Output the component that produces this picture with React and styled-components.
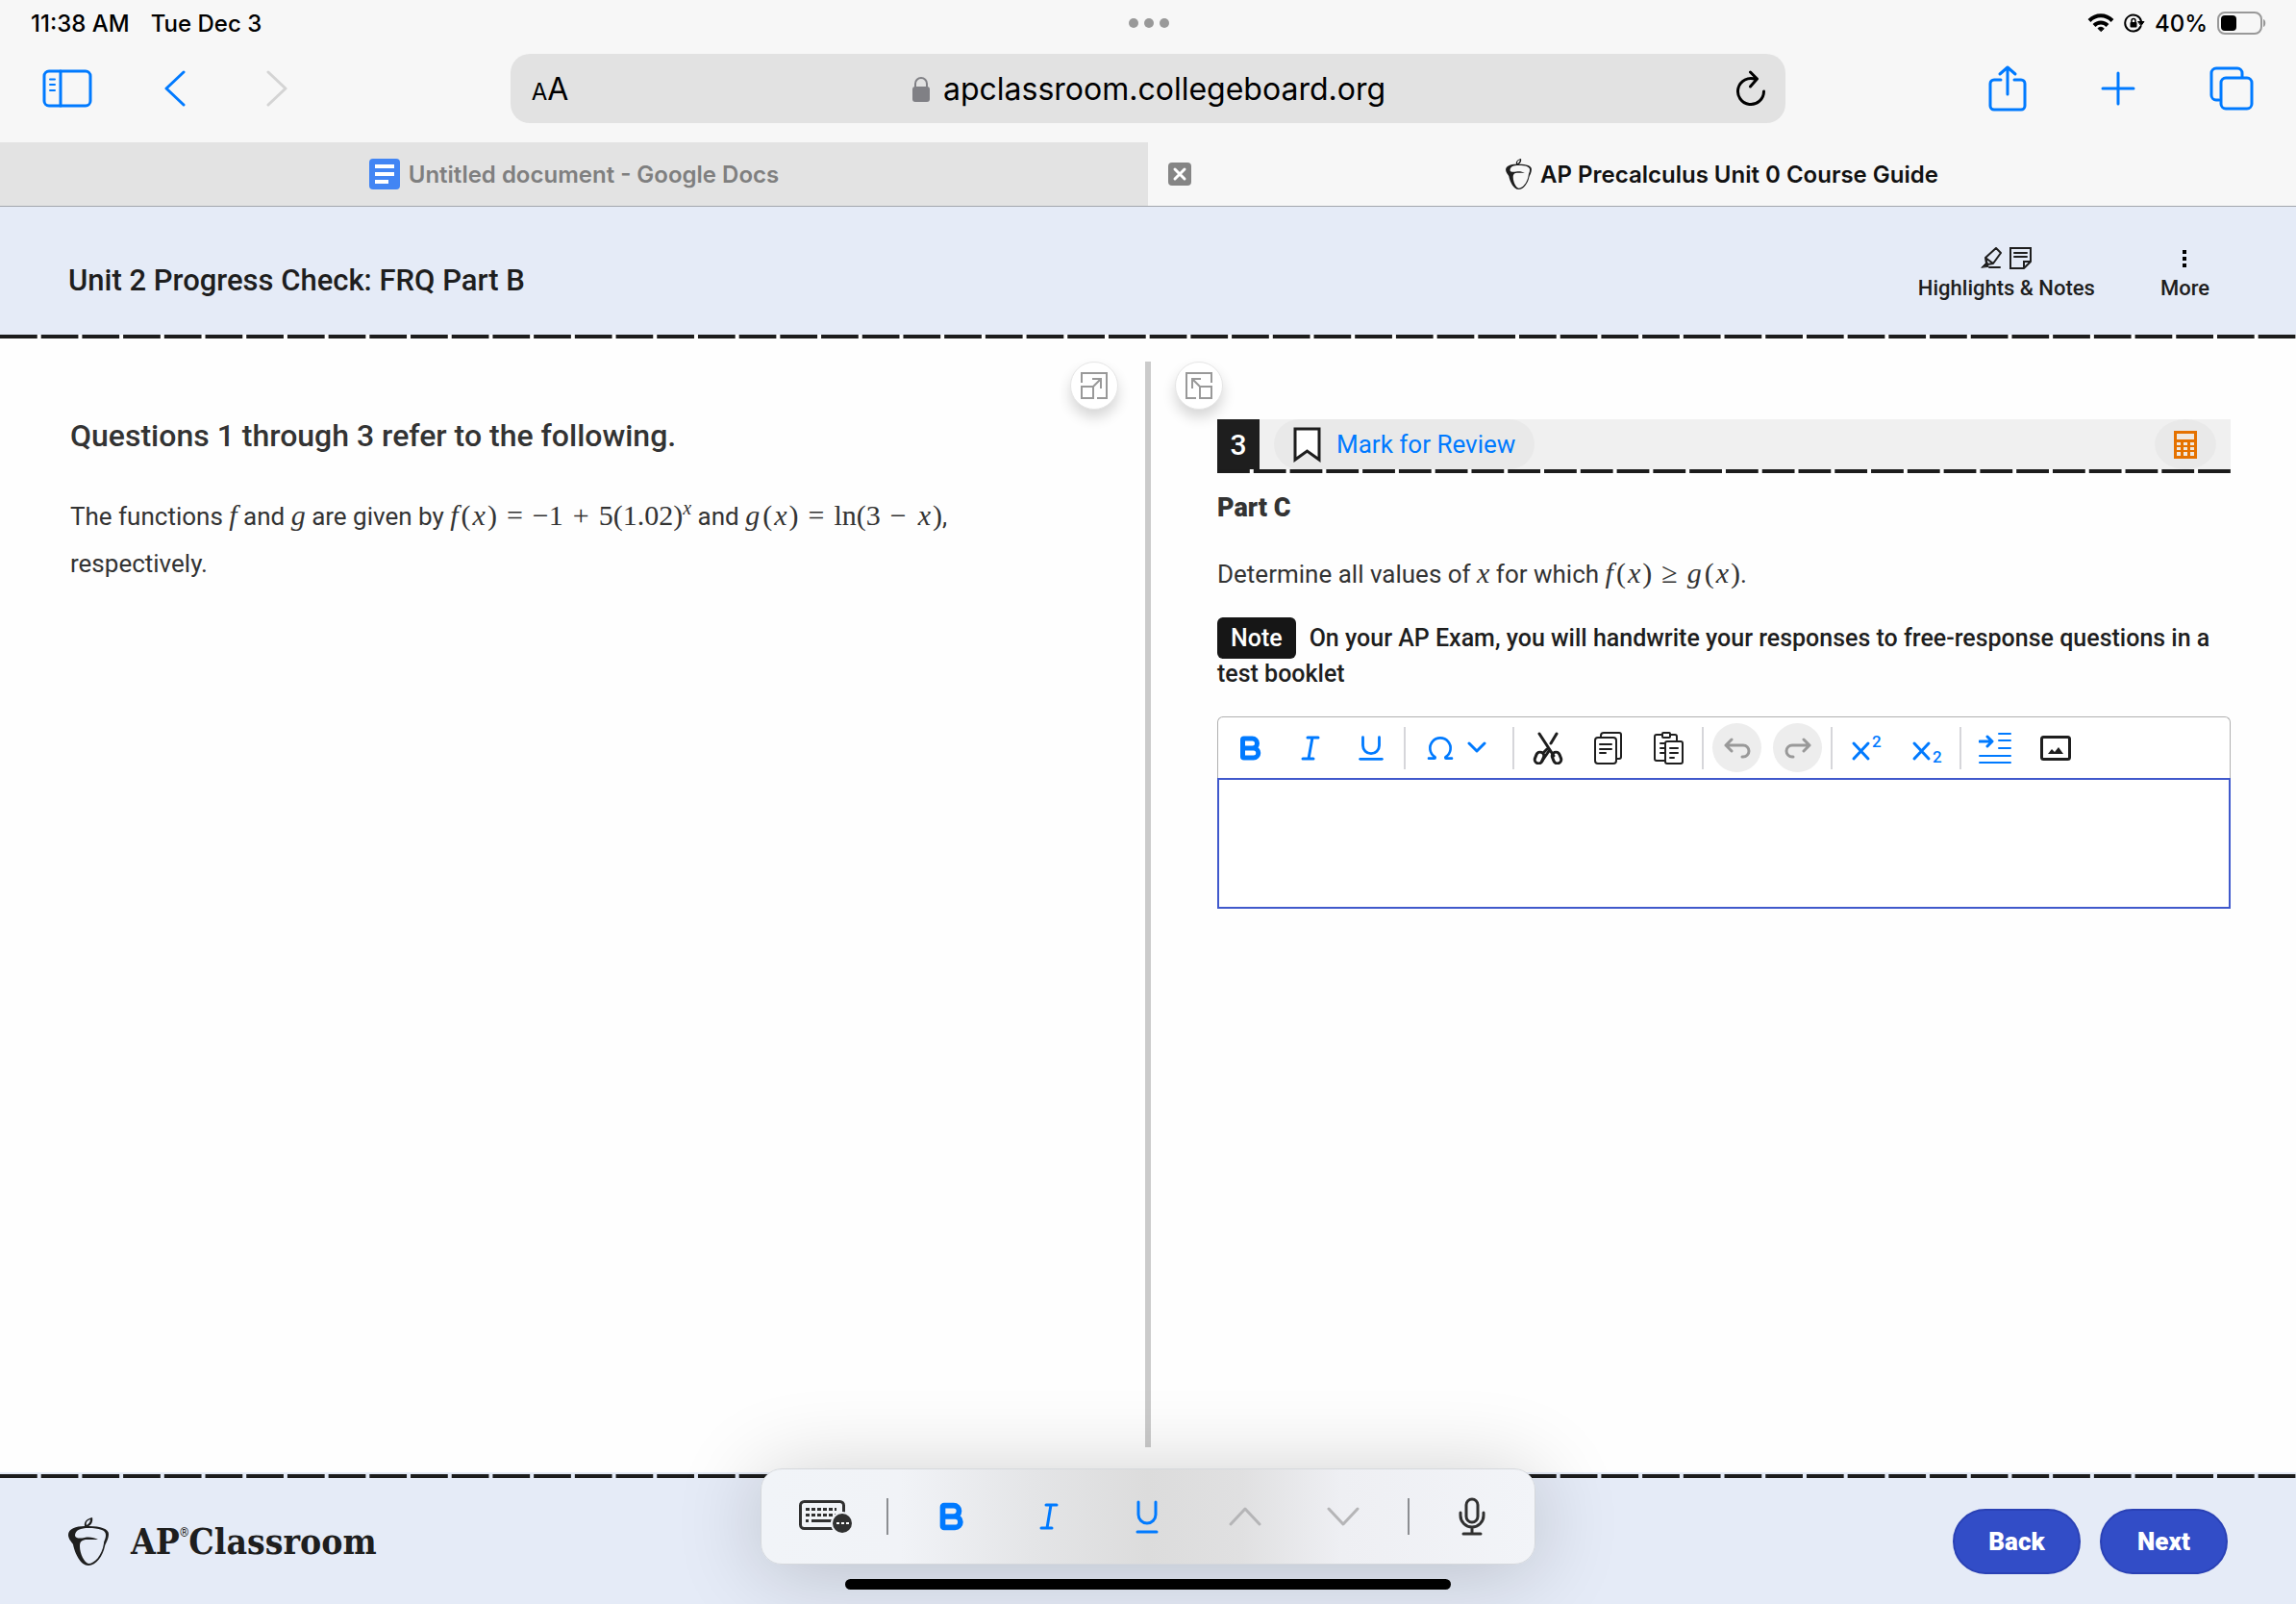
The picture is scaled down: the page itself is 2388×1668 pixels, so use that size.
import React from 'react';
import styled, { createGlobalStyle, css } from 'styled-components';
import { Bold, Underline, Omega } from 'lucide-react';

const GlobalStyle = createGlobalStyle`
  * {
    box-sizing: border-box;
  }

  body {
    margin: 0;
    background: #fefefe;
    color: #1e1e1e;
    font-family: Roboto, "Liberation Sans", sans-serif;
  }

  button {
    border: 0;
    padding: 0;
    background: none;
    color: inherit;
    font: inherit;
    cursor: pointer;
  }

  svg {
    display: block;
    flex: none;
  }
`;

const Page = styled.div`
  display: flex;
  flex-direction: column;
  min-height: 100vh;
`;

/* ---------- browser ---------- */

const Browser = styled.header`
  background: #f7f7f7;
  color: #000;
  font-family: Inter, sans-serif;
`;

const StatusBar = styled.div`
  display: grid;
  grid-template-columns: 1fr auto 1fr;
  align-items: center;
  height: 48px;
  padding: 0 30px 0 32px;
  font-size: 24px;
  font-weight: 500;
`;

const StatusGroup = styled.div`
  display: flex;
  align-items: center;
  gap: ${({ $gap }) => $gap}px;
  justify-content: ${({ $end }) => ($end ? 'flex-end' : 'flex-start')};
`;

const Dots = styled.div`
  display: flex;
  gap: 6px;

  span {
    width: 10px;
    height: 10px;
    border-radius: 50%;
    background: #999;
  }
`;

const BrowserToolbar = styled.div`
  display: grid;
  grid-template-columns: 2fr 5fr 2fr;
  align-items: center;
  padding: 8px 0 20px;
  color: #007aff;
`;

const ToolbarGroup = styled.div`
  display: flex;
  align-items: center;
  gap: ${({ $gap }) => $gap}px;
  padding: 0 44px;
  justify-content: ${({ $end }) => ($end ? 'flex-end' : 'flex-start')};
`;

const AddressBar = styled.div`
  display: grid;
  grid-template-columns: 1fr auto 1fr;
  align-items: center;
  height: 72px;
  padding: 0 20px 0 22px;
  border-radius: 20px;
  background: #e2e2e2;
  color: #000;
`;

const TextSize = styled.button`
  justify-self: start;
  font-size: 32px;

  small {
    font-size: 24px;
  }
`;

const Address = styled.div`
  display: flex;
  align-items: center;
  gap: 14px;
  font-size: 32px;
`;

const Reload = styled.button`
  justify-self: end;
`;

const Tabs = styled.div`
  display: grid;
  grid-template-columns: 1fr 1fr;
  border-bottom: 1px solid #a3a6ad;
`;

const Tab = styled.div`
  display: grid;
  grid-template-columns: 1fr auto 1fr;
  align-items: center;
  height: 66px;
  padding: 0 21px;
  background: ${({ $active }) => ($active ? '#f7f7f7' : '#e3e3e3')};
  color: ${({ $active }) => ($active ? '#111' : '#7f7f7f')};
  font-size: 24px;
  font-weight: 600;
`;

const TabLabel = styled.div`
  grid-column: 2;
  display: flex;
  align-items: center;
  gap: 9px;
`;

/* ---------- test page ---------- */

const dashes = css`
  background-image: linear-gradient(90deg, #1c1c1c calc(100% - 4px), transparent 0);
  background-size: calc((100% + 4px) / ${({ $count }) => $count}) 4px;
  background-repeat: repeat-x;
`;

const DashedLine = styled.div`
  height: 4px;
  ${dashes}
`;

const TestHeader = styled.div`
  display: flex;
  align-items: center;
  justify-content: space-between;
  height: 133px;
  padding: 20px 90px 0 71px;
  background: #e5ebf7;
`;

const TestTitle = styled.h1`
  margin: 0;
  font-size: 31px;
  font-weight: 500;
`;

const HeaderTools = styled.div`
  display: flex;
  align-items: flex-end;
  gap: 68px;
  padding-bottom: 12px;
`;

const HeaderTool = styled.button`
  display: flex;
  flex-direction: column;
  align-items: center;
  gap: 6px;
  font-size: 22px;
  font-weight: 500;
  line-height: 28px;
`;

const IconPair = styled.span`
  display: flex;
  gap: 8px;
`;

const Main = styled.main`
  flex: 1;
  display: grid;
  grid-template-columns: 1fr 6px 1fr;
  padding: 24px 0 26px;
`;

const Divider = styled.div`
  background: #cbcbcb;
`;

const Pane = styled.section`
  display: flex;
  flex-direction: column;
  padding: ${({ $right }) => ($right ? '0 68px 0 25px' : '0 28px 0 73px')};
  color: #333;
`;

const ResizeButton = styled.button`
  display: grid;
  place-items: center;
  align-self: ${({ $end }) => ($end ? 'flex-end' : 'flex-start')};
  width: 50px;
  height: 50px;
  border: 1px solid #e6e6e6;
  border-radius: 50%;
  background: #fff;
  color: #999;
  box-shadow: 0 8px 14px rgba(0, 0, 0, 0.16);
`;

const Stimulus = styled.h2`
  margin: 8px 0 0;
  font-size: 32px;
  font-weight: 500;
  line-height: 38px;
`;

const Passage = styled.p`
  margin: 41px 0 0;
  font-size: 26px;
  line-height: 49px;
`;

const Formula = styled.span`
  font-family: "Liberation Serif", serif;
  font-size: 30px;
  line-height: 0;
  white-space: nowrap;

  sup {
    font-size: 20px;
  }
`;

const Operator = styled.span`
  margin: 0 10px;
`;

const Argument = styled.i`
  margin: 0 2px;
`;

const FunctionName = styled.i`
  margin-right: 3px;
`;

const Question = styled.div`
  padding: 10px 0 0 44px;
`;

const QuestionBar = styled.div`
  display: flex;
  align-items: stretch;
  height: 52px;
  background: #f0f0f0;
`;

const QuestionNumber = styled.div`
  display: grid;
  place-items: center;
  width: 44px;
  background: #1e1e1e;
  color: #fff;
  font-size: 30px;
  font-weight: 500;
`;

const MarkButton = styled.button`
  display: flex;
  align-items: center;
  gap: 16px;
  margin-left: 15px;
  padding: 0 20px;
  border-radius: 26px;
  background: #e9e9e9;
  color: #007aff;
  font-size: 26px;
`;

const CalculatorButton = styled.button`
  display: grid;
  place-items: center;
  width: 64px;
  margin: 0 15px 0 auto;
  border-radius: 50%;
  background: #e9e9e9;
`;

const PartTitle = styled.h3`
  margin: 20px 0 0;
  font-size: 27px;
  font-weight: 900;
  line-height: 32px;
`;

const Prompt = styled.p`
  margin: 29px 0 0;
  font-size: 26px;
  line-height: 49px;
`;

const Note = styled.p`
  margin: 23px 0 26px;
  color: #1e1e1e;
  font-size: 25px;
  font-weight: 500;
  line-height: 37px;
`;

const NoteBadge = styled.span`
  margin-right: 14px;
  padding: 7px 14px;
  border-radius: 6px;
  background: #161616;
  color: #fff;
`;

const Editor = styled.div`
  display: flex;
  flex-direction: column;
`;

const EditorToolbar = styled.div`
  display: flex;
  align-items: center;
  height: 64px;
  padding-left: 1px;
  border: 1px solid #b0b0b0;
  border-bottom: 0;
  border-radius: 6px 6px 0 0;
  background: #fff;
  color: #007aff;
`;

const EditorButton = styled.button`
  display: flex;
  align-items: center;
  justify-content: center;
  gap: 12px;
  width: ${({ $wide }) => ($wide ? 105 : 63)}px;
  height: 51px;
  padding-right: ${({ $wide }) => ($wide ? 8 : 0)}px;
  color: ${({ $dark }) => ($dark ? '#1e1e1e' : 'inherit')};
`;

const HistoryCircle = styled.span`
  display: grid;
  place-items: center;
  width: 51px;
  height: 51px;
  border-radius: 50%;
  background: #ededed;
  color: #999;
`;

const EditorSeparator = styled.span`
  width: 2px;
  height: 44px;
  margin: 0 3px;
  background: #d6d6da;
`;

const Answer = styled.textarea`
  height: 136px;
  padding: 12px;
  border: 2px solid #4059cc;
  border-radius: 0;
  outline: 0;
  background: #fff;
  font: 26px/37px Roboto, sans-serif;
  resize: none;
`;

const Footer = styled.footer`
  background: #e5ebf7;
  padding-top: 2px;
`;

const FooterContent = styled.div`
  display: flex;
  align-items: center;
  justify-content: space-between;
  height: 131px;
  padding: 0 71px;
`;

const Brand = styled.div`
  display: flex;
  align-items: center;
  gap: 23px;
  font-family: "DejaVu Serif Condensed", "DejaVu Serif", serif;
  font-size: 37px;
  font-weight: 700;

  sup {
    font: 12px Roboto, sans-serif;
    vertical-align: 18px;
  }
`;

const FooterButtons = styled.div`
  display: flex;
  gap: 20px;
`;

const PillButton = styled.button`
  width: 133px;
  height: 68px;
  border: 2px solid #2a41b5;
  border-radius: 34px;
  background: #324dc7;
  color: #fff;
  font-size: 26px;
  font-weight: 900;
`;

/* ---------- floating keyboard bar ---------- */

const KeyboardBar = styled.div`
  position: fixed;
  left: 50%;
  bottom: 41px;
  transform: translateX(-50%);
  display: flex;
  align-items: center;
  height: 100px;
  border: 1px solid #d5d8dc;
  border-radius: 22px;
  background:
    linear-gradient(90deg, #f1f4f8 0%, #f1f3f7 18%, #e4e5e7 35%, #dcdcdc 50%, #e0e0e1 62%, #eeeff3 75%, #f2f4f8 100%);
  box-shadow: 0 6px 90px rgba(0, 0, 0, 0.2);
  color: #007aff;
`;

const KeyboardButton = styled.button`
  display: grid;
  place-items: center;
  width: ${({ $edge }) => ($edge ? 130 : 102)}px;
  height: 80px;
  color: ${({ $tone }) => $tone || 'inherit'};
`;

const KeyboardSeparator = styled.span`
  width: 2px;
  height: 38px;
  background: #8c8e92;
`;

const KeyboardActions = styled.div`
  display: flex;
  padding: 0 16px 0 14px;
`;

const HomeIndicator = styled.div`
  position: fixed;
  left: 50%;
  bottom: 15px;
  transform: translateX(-50%);
  width: 630px;
  height: 11px;
  border-radius: 6px;
  background: #000;
`;

/* ---------- icons ---------- */

const Icon = ({ w, h, sw = 3, children }) => (
  <svg
    width={w}
    height={h}
    viewBox={`0 0 ${w} ${h}`}
    fill="none"
    stroke="currentColor"
    strokeWidth={sw}
    strokeLinecap="round"
    strokeLinejoin="round"
    aria-hidden="true"
  >
    {children}
  </svg>
);

const AcornIcon = ({ width, height }) => (
  <svg width={width} height={height} viewBox="0 0 42 50" fill="#1e1e1e" aria-hidden="true">
    <path
      fillRule="evenodd"
      d="M0 18C0 12 8 9 17 9C16 4 20 1 25 0C26 4 24 8 21 9C34 9 42 12 42 17C42 23 39 26 38 30C36 40 29 50 21 50C13 50 7 38 5 28C3 25 0 22 0 18ZM7 19C8 22 12 22 17 21C22 20 27 21 31 23L20 23C14 23 12 25 12 30C12 38 17 47 21 48C27 48 35 40 37 27C37 24 39 23 39 18C39 13 32 11 21 11C13 11 7 13 7 19ZM19 8C21 7 23 5 23 2C20 3 18 5 19 8Z"
    />
  </svg>
);

const WifiIcon = () => (
  <Icon w={28} h={21} sw={4}>
    <path d="M2 7.500C9 0.500 19 0.500 26 7.500M7 12.500C11 8.500 17 8.500 21 12.500" strokeLinecap="butt" />
    <path d="M14 18.500L11 15.500C13 13.800 15 13.800 17 15.500Z" fill="currentColor" strokeWidth="1" />
  </Icon>
);

const RotationLockIcon = () => (
  <Icon w={22} h={20} sw={2}>
    <path d="M17.500 13.500A8.500 8.500 0 1 1 18 8" />
    <path d="M15 8.500H21L18 12.500Z" fill="currentColor" strokeWidth="1" />
    <rect x="6.500" y="9" width="7" height="5.500" rx="1" fill="currentColor" stroke="none" />
    <path d="M8 9V7.500A2 2 0 0 1 12 7.500V9" strokeWidth="1.500" />
  </Icon>
);

const BatteryIcon = () => (
  <svg width="52" height="24" viewBox="0 0 52 24" aria-hidden="true">
    <rect x="1" y="1" width="45" height="22" rx="7" fill="none" stroke="#999" strokeWidth="2" />
    <rect x="4" y="4" width="16" height="16" rx="4" />
    <path d="M48 8C51 9 51 15 48 16Z" fill="#999" />
  </svg>
);

const SidebarIcon = () => (
  <Icon w={52} h={40}>
    <rect x="2" y="2" width="48" height="36" rx="5" />
    <path d="M19 2V38" />
    <path d="M8 10.500H13M8 16H13M8 22H13" strokeWidth="2" />
  </Icon>
);

const ShareIcon = () => (
  <Icon w={40} h={48}>
    <path d="M13 15H6A4 4 0 0 0 2 19V42A4 4 0 0 0 6 46H34A4 4 0 0 0 38 42V19A4 4 0 0 0 34 15H27" />
    <path d="M20 30V2M12 9L20 2L28 9" />
  </Icon>
);

const TabsIcon = () => (
  <Icon w={46} h={46}>
    <path d="M10 35H7A5 5 0 0 1 2 30V7A5 5 0 0 1 7 2H29A5 5 0 0 1 34 7V11" />
    <rect x="12" y="12" width="32" height="32" rx="5" />
  </Icon>
);

const LockIcon = () => (
  <svg width="18" height="27" viewBox="0 0 18 27" aria-hidden="true">
    <path d="M3 12V8A6 6 0 0 1 15 8V12" fill="none" stroke="#808085" strokeWidth="2" />
    <rect y="11" width="18" height="16" rx="3" fill="#808085" />
  </svg>
);

const ReloadIcon = () => (
  <Icon w={32} h={38}>
    <path d="M21 9.500A13.500 13.500 0 1 0 29.500 22M15.500 2L22.500 9L15.500 17" />
  </Icon>
);

const DocsIcon = () => (
  <svg width="32" height="32" viewBox="0 0 32 32" aria-hidden="true">
    <rect width="32" height="32" rx="4" fill="#4285f4" />
    <path d="M6 6H26V10H6ZM6 14H26V18H6ZM6 22H20V26H6Z" fill="#fff" />
  </svg>
);

const CloseIcon = () => (
  <svg width="24" height="24" viewBox="0 0 24 24" aria-hidden="true">
    <rect width="24" height="24" rx="4" fill="#858585" />
    <path d="M7 7L17 17M17 7L7 17" stroke="#fff" strokeWidth="3" strokeLinecap="round" />
  </svg>
);

const HighlighterIcon = () => (
  <Icon w={22} h={22} sw={2}>
    <path d="M5 11L16 1L21 6L13 17L7 18ZM5 11L6 17M5 11L13 17" />
    <path d="M1 21L6 16L8 20Z" fill="currentColor" strokeWidth="1" />
    <path d="M9 21H20" />
  </Icon>
);

const NoteIcon = () => (
  <Icon w={23} h={23} sw={2}>
    <path d="M1 1H22V15L15 22H1ZM15 22V15H22M5 6H18M5 10H18" strokeLinejoin="miter" />
  </Icon>
);

const ResizeIcon = ({ flip }) => (
  <Icon w={28} h={28} sw={2}>
    <g transform={flip ? 'translate(28 0) scale(-1 1)' : undefined} strokeLinejoin="miter" strokeLinecap="butt">
      <path d="M1 11V1H27V27H17" />
      <path d="M1 15H13V27H1ZM13 15L21 7M12 7H21V17" />
    </g>
  </Icon>
);

const BookmarkIcon = () => (
  <svg width="29" height="37" viewBox="0 0 29 37" aria-hidden="true">
    <path d="M2 2H27V34L14.500 25L2 34Z" fill="#fff" stroke="#1e1e1e" strokeWidth="3" />
  </svg>
);

const CalculatorIcon = () => (
  <svg width="24" height="29" viewBox="0 0 24 29" aria-hidden="true">
    <rect width="24" height="29" fill="#e57200" />
    <path
      d="M3 3H21V9H3ZM3 12H7V15H3ZM10 12H14V15H10ZM17 12H21V15H17ZM3 17H7V20H3ZM10 17H14V20H10ZM17 17H21V20H17ZM3 22H7V26H3ZM10 22H14V26H10ZM17 22H21V26H17Z"
      fill="#f0e9e0"
    />
  </svg>
);

const ItalicIcon = ({ h = 28, sw = 3 }) => (
  <Icon w={20} h={h} sw={sw}>
    <path d={`M7 2H18M2 ${h - 2}H13M12 2L8 ${h - 2}`} />
  </Icon>
);

const CutIcon = () => (
  <Icon w={32} h={34}>
    <path d="M7 2L22 25M25 2L19 12M17 20L10 30" />
    <path d="M15 18L11 22" />
    <rect x="3" y="21" width="8" height="12" rx="4" transform="rotate(22 7 27)" />
    <rect x="21" y="21" width="8" height="12" rx="4" transform="rotate(-22 25 27)" />
  </Icon>
);

const CopyIcon = () => (
  <Icon w={30} h={34} sw={2}>
    <path d="M7 6V4A3 3 0 0 1 10 1H26A2 2 0 0 1 28 3V26A2 2 0 0 1 26 28H24" />
    <rect x="1" y="6" width="22" height="27" rx="3" />
    <path d="M6 13H18M6 18H18M6 22H12" />
  </Icon>
);

const PasteIcon = () => (
  <Icon w={32} h={34} sw={2}>
    <path d="M9 3H3A2 2 0 0 0 1 5V28A2 2 0 0 0 3 30H11M17 3H22A2 2 0 0 1 24 5V10" />
    <rect x="9" y="1" width="8" height="5" rx="1" />
    <path d="M7 12H11M7 17H11M7 22H11" />
    <rect x="12" y="10" width="18" height="23" rx="2" />
    <path d="M17 17H25M17 22H25M17 27H21" />
  </Icon>
);

const HistoryIcon = ({ flip }) => (
  <Icon w={28} h={22} sw={3}>
    <g transform={flip ? 'translate(28 0) scale(-1 1)' : undefined}>
      <path d="M8 2L2 8L8 14M2 8H20A6 6 0 0 1 20 20H19" />
    </g>
  </Icon>
);

const ScriptIcon = ({ sub }) => (
  <Icon w={34} h={40}>
    <path d="M4 15L19 31M19 15L4 31" />
    <text
      x="23"
      y={sub ? 35 : 19}
      fill="currentColor"
      stroke="none"
      fontFamily="Roboto, sans-serif"
      fontSize="17"
      fontWeight="500"
    >
      2
    </text>
  </Icon>
);

const IndentIcon = () => (
  <Icon w={34} h={34} sw={2}>
    <path d="M21 2H33M21 9H33M21 17H33M1 25H33M1 32H33" />
    <path d="M1 10H13M9 5L14 10L9 15" strokeWidth="3" />
  </Icon>
);

const ImageIcon = () => (
  <Icon w={32} h={26}>
    <rect x="1.500" y="1.500" width="29" height="23" rx="2" />
    <path d="M8 19L12 14L15 17L19 12L24 19Z" fill="currentColor" stroke="none" />
  </Icon>
);

const KeyboardIcon = () => (
  <svg width="60" height="34" viewBox="-4 0 60 34" fill="#303030" aria-hidden="true">
    <rect x="1.500" y="1.500" width="45" height="28" rx="4" fill="none" stroke="#303030" strokeWidth="3" />
    <path d="M10 9.500H42M10 15.500H42" fill="none" stroke="#303030" strokeWidth="3" strokeDasharray="4 2" transform="translate(-3 0)" />
    <path d="M7 20H10V23H7ZM13 20H35V23H13Z" />
    <circle cx="45" cy="24" r="12" fill="#f1f3f7" />
    <circle cx="45" cy="24" r="10" />
    <path d="M39 23H42V25H39ZM44 23H47V25H44ZM49 23H52V25H49Z" fill="#fff" />
  </svg>
);

const MicIcon = () => (
  <Icon w={28} h={40}>
    <rect x="8" y="2" width="12" height="24" rx="6" />
    <path d="M2 16V19A12 12 0 0 0 26 19V16M14 31V38M5 38H23" />
  </Icon>
);

const App = () => {
  return (
    <Page>
      <GlobalStyle />

      <Browser>
        <StatusBar>
          <StatusGroup $gap={22}>
            <span>11:38 AM</span>
            <span>Tue Dec 3</span>
          </StatusGroup>
          <Dots>
            <span />
            <span />
            <span />
          </Dots>
          <StatusGroup $gap={10} $end>
            <WifiIcon />
            <RotationLockIcon />
            <span>40%</span>
            <BatteryIcon />
          </StatusGroup>
        </StatusBar>

        <BrowserToolbar>
          <ToolbarGroup $gap={72}>
            <button aria-label="Show sidebar"><SidebarIcon /></button>
            <button aria-label="Go back">
              <Icon w={30} h={38}><path d="M23 2L5 19L23 36" /></Icon>
            </button>
            <button aria-label="Go forward" disabled>
              <Icon w={30} h={38}><path d="M9 2L27 19L9 36" stroke="#d4d4d4" /></Icon>
            </button>
          </ToolbarGroup>
          <AddressBar>
            <TextSize aria-label="Page settings"><small>A</small>A</TextSize>
            <Address>
              <LockIcon />
              <span>apclassroom.collegeboard.org</span>
            </Address>
            <Reload aria-label="Reload"><ReloadIcon /></Reload>
          </AddressBar>
          <ToolbarGroup $gap={77} $end>
            <button aria-label="Share"><ShareIcon /></button>
            <button aria-label="New tab">
              <Icon w={36} h={36}><path d="M18 2V34M2 18H34" /></Icon>
            </button>
            <button aria-label="Show tabs"><TabsIcon /></button>
          </ToolbarGroup>
        </BrowserToolbar>

        <Tabs>
          <Tab>
            <TabLabel>
              <DocsIcon />
              <span>Untitled document - Google Docs</span>
            </TabLabel>
          </Tab>
          <Tab $active>
            <button aria-label="Close tab"><CloseIcon /></button>
            <TabLabel>
              <AcornIcon width={27} height={32} />
              <span>AP Precalculus Unit 0 Course Guide</span>
            </TabLabel>
          </Tab>
        </Tabs>
      </Browser>

      <TestHeader>
        <TestTitle>Unit 2 Progress Check: FRQ Part B</TestTitle>
        <HeaderTools>
          <HeaderTool>
            <IconPair>
              <HighlighterIcon />
              <NoteIcon />
            </IconPair>
            Highlights &amp; Notes
          </HeaderTool>
          <HeaderTool>
            <svg width="4" height="20" viewBox="0 0 4 20" aria-hidden="true">
              <path d="M0 0H4V4H0ZM0 7H4V11H0ZM0 14H4V18H0Z" />
            </svg>
            More
          </HeaderTool>
        </HeaderTools>
      </TestHeader>
      <DashedLine $count={56} />

      <Main>
        <Pane>
          <ResizeButton $end aria-label="Expand passage"><ResizeIcon /></ResizeButton>
          <Stimulus>Questions 1 through 3 refer to the following.</Stimulus>
          <Passage>
            The functions <Formula><i>f</i></Formula> and <Formula><i>g</i></Formula> are given by{' '}
            <Formula>
              <FunctionName>f</FunctionName>(<Argument>x</Argument>)<Operator>=</Operator>−1
              <Operator>+</Operator>5(1.02)<sup><i>x</i></sup>
            </Formula>{' '}
            and{' '}
            <Formula>
              <FunctionName>g</FunctionName>(<Argument>x</Argument>)<Operator>=</Operator>ln(3
              <Operator>−</Operator><Argument>x</Argument>)
            </Formula>
            ,<br />
            respectively.
          </Passage>
        </Pane>

        <Divider />

        <Pane $right>
          <ResizeButton aria-label="Expand question"><ResizeIcon flip /></ResizeButton>
          <Question>
            <QuestionBar>
              <QuestionNumber>3</QuestionNumber>
              <MarkButton>
                <BookmarkIcon />
                Mark for Review
              </MarkButton>
              <CalculatorButton aria-label="Calculator"><CalculatorIcon /></CalculatorButton>
            </QuestionBar>
            <DashedLine $count={28} />

            <PartTitle>Part C</PartTitle>
            <Prompt>
              Determine all values of <Formula><i>x</i></Formula> for which{' '}
              <Formula>
                <FunctionName>f</FunctionName>(<Argument>x</Argument>)<Operator>≥</Operator>
                <FunctionName>g</FunctionName>(<Argument>x</Argument>)
              </Formula>
              .
            </Prompt>
            <Note>
              <NoteBadge>Note</NoteBadge>
              On your AP Exam, you will handwrite your responses to free-response questions in a test booklet
            </Note>

            <Editor>
              <EditorToolbar>
                <EditorButton aria-label="Bold"><Bold size={30} strokeWidth={4} /></EditorButton>
                <EditorButton aria-label="Italic"><ItalicIcon h={26} /></EditorButton>
                <EditorButton aria-label="Underline"><Underline size={34} strokeWidth={2} /></EditorButton>
                <EditorSeparator />
                <EditorButton $wide aria-label="Special characters">
                  <Omega size={32} strokeWidth={2} />
                  <Icon w={20} h={13}><path d="M2 2L10 10L18 2" /></Icon>
                </EditorButton>
                <EditorSeparator />
                <EditorButton $dark aria-label="Cut"><CutIcon /></EditorButton>
                <EditorButton $dark aria-label="Copy"><CopyIcon /></EditorButton>
                <EditorButton $dark aria-label="Paste"><PasteIcon /></EditorButton>
                <EditorSeparator />
                <EditorButton aria-label="Undo"><HistoryCircle><HistoryIcon /></HistoryCircle></EditorButton>
                <EditorButton aria-label="Redo"><HistoryCircle><HistoryIcon flip /></HistoryCircle></EditorButton>
                <EditorSeparator />
                <EditorButton aria-label="Superscript"><ScriptIcon /></EditorButton>
                <EditorButton aria-label="Subscript"><ScriptIcon sub /></EditorButton>
                <EditorSeparator />
                <EditorButton aria-label="Indent"><IndentIcon /></EditorButton>
                <EditorButton $dark aria-label="Insert image"><ImageIcon /></EditorButton>
              </EditorToolbar>
              <Answer aria-label="Response" />
            </Editor>
          </Question>
        </Pane>
      </Main>

      <Footer>
        <DashedLine $count={56} />
        <FooterContent>
          <Brand>
            <AcornIcon width={42} height={50} />
            <span>AP<sup>®</sup>Classroom</span>
          </Brand>
          <FooterButtons>
            <PillButton>Back</PillButton>
            <PillButton>Next</PillButton>
          </FooterButtons>
        </FooterContent>
      </Footer>

      <KeyboardBar>
        <KeyboardButton $edge aria-label="Keyboard options"><KeyboardIcon /></KeyboardButton>
        <KeyboardSeparator />
        <KeyboardActions>
          <KeyboardButton aria-label="Bold"><Bold size={34} strokeWidth={4} /></KeyboardButton>
          <KeyboardButton aria-label="Italic"><ItalicIcon /></KeyboardButton>
          <KeyboardButton aria-label="Underline">
            <Icon w={26} h={36}><path d="M4 3V16A9 9 0 0 0 22 16V3M3 34H23" /></Icon>
          </KeyboardButton>
          <KeyboardButton $tone="#b5b5b7" aria-label="Previous field">
            <Icon w={34} h={20}><path d="M2 18L17 2L32 18" /></Icon>
          </KeyboardButton>
          <KeyboardButton $tone="#b5b5b7" aria-label="Next field">
            <Icon w={34} h={20}><path d="M2 2L17 18L32 2" /></Icon>
          </KeyboardButton>
        </KeyboardActions>
        <KeyboardSeparator />
        <KeyboardButton $edge $tone="#303030" aria-label="Dictate"><MicIcon /></KeyboardButton>
      </KeyboardBar>
      <HomeIndicator />
    </Page>
  );
};

export default App;
